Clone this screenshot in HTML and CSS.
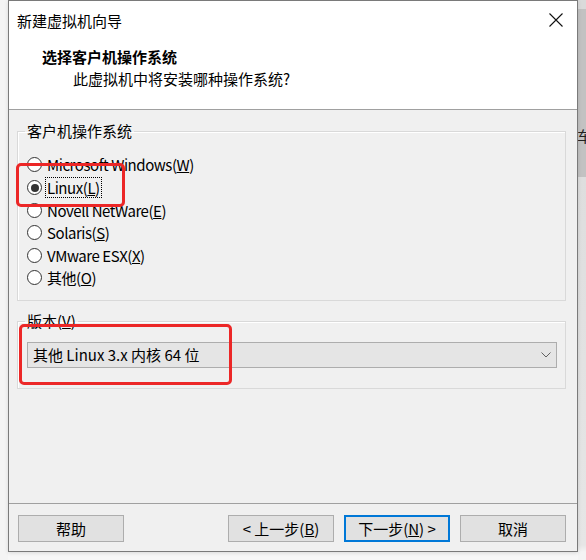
FILE: index.html
```html
<!DOCTYPE html>
<html lang="zh-CN">
<head>
<meta charset="utf-8">
<title>新建虚拟机向导</title>
<link rel="stylesheet" href="styles.css">
</head>
<body>
<div class="desktop">
  <div class="left-gap"></div>
  <div class="window">
    <div class="top">
      <div class="titlebar">
        <span class="title">新建虚拟机向导</span>
        <span class="close">
          <svg width="14" height="14" viewBox="0 0 14 14"><path d="M0.5 0.5 L13.5 13.5 M13.5 0.5 L0.5 13.5" stroke="#111" stroke-width="1.1" fill="none"/></svg>
        </span>
      </div>
      <div class="header">
        <div class="heading">选择客户机操作系统</div>
        <div class="subheading">此虚拟机中将安装哪种操作系统?</div>
      </div>
    </div>
    <div class="content">
      <fieldset class="group os-group">
        <legend>客户机操作系统</legend>
        <div class="radio"><span class="circle"></span><span class="lbl">Microsoft Windows(<u>W</u>)</span></div>
        <div class="radio"><span class="circle checked"></span><span class="lbl focus">Linux(<u>L</u>)</span></div>
        <div class="radio"><span class="circle"></span><span class="lbl">Novell NetWare(<u>E</u>)</span></div>
        <div class="radio"><span class="circle"></span><span class="lbl">Solaris(<u>S</u>)</span></div>
        <div class="radio"><span class="circle"></span><span class="lbl">VMware ESX(<u>X</u>)</span></div>
        <div class="radio"><span class="circle"></span><span class="lbl">其他(<u>O</u>)</span></div>
      </fieldset>
      <fieldset class="group ver-group">
        <legend>版本(<u>V</u>)</legend>
        <div class="select">
          <span class="select-text">其他 Linux 3.x 内核 64 位</span>
          <svg class="chevron" width="10" height="6" viewBox="0 0 10 6"><path d="M0.5 0.5 L5 5 L9.5 0.5" stroke="#606060" stroke-width="1" fill="none"/></svg>
        </div>
      </fieldset>
    </div>
    <div class="footer">
      <button class="btn">帮助</button>
      <div class="nav">
        <button class="btn">&lt; 上一步(<u>B</u>)</button>
        <button class="btn primary">下一步(<u>N</u>) &gt;</button>
        <button class="btn">取消</button>
      </div>
    </div>
    <div class="mark mark-linux"></div>
    <div class="mark mark-version"></div>
  </div>
  <div class="edge"><span class="edge-char">车</span></div>
</div>
</body>
</html>
```
FILE: styles.css
```css
* { box-sizing: border-box; }

html, body {
  margin: 0;
  padding: 0;
}

body {
  width: 586px;
  height: 560px;
  overflow: hidden;
  background: #f7f7f7;
  font-family: "Noto Sans CJK SC", "Noto Sans", sans-serif;
  font-size: 15px;
  color: #000;
}

.desktop {
  display: flex;
  align-items: flex-start;
  height: 560px;
}

.left-gap {
  width: 8px;
  height: 560px;
  background: #f4f4f4;
}

.window {
  position: relative;
  width: 570px;
  height: 552px;
  border: 1px solid #7a7a7a;
  background: #f0f0f0;
  display: flex;
  flex-direction: column;
  box-shadow: 0 1px 4px rgba(0, 0, 0, 0.12);
}

.top {
  height: 109px;
  background: #ffffff;
  border-bottom: 1px solid #a0a0a0;
  display: flex;
  flex-direction: column;
}

.titlebar {
  height: 38px;
  display: flex;
  align-items: center;
  justify-content: space-between;
  padding: 0 14px 0 8px;
}

.title {
  line-height: 20px;
  font-size: 15px;
  margin-top: 2px;
}

.close {
  display: flex;
  width: 14px;
  height: 14px;
}

.header {
  padding-top: 8px;
  display: flex;
  flex-direction: column;
  gap: 2px;
}

.heading {
  padding-left: 33px;
  font-weight: 700;
  line-height: 20px;
}

.subheading {
  padding-left: 64px;
  line-height: 20px;
}

.content {
  flex: 1;
  padding: 11px 11px 0 8px;
  display: flex;
  flex-direction: column;
  gap: 10px;
}

.group {
  margin: 0;
  min-width: 0;
  border: 1px solid #d9d9d9;
  box-shadow: inset 1px 1px 0 #ffffff;
}

.group legend {
  padding: 0 2px;
  margin-left: -2px;
  line-height: 20px;
}

.os-group {
  padding: 12.7px 8px 11px 9px;
}

.radio {
  height: 22.6px;
  display: flex;
  align-items: center;
}

.circle {
  width: 15px;
  height: 15px;
  border: 1px solid #333333;
  border-radius: 50%;
  background: #ffffff;
  flex: none;
  display: flex;
  align-items: center;
  justify-content: center;
  margin-right: 5px;
}

.circle.checked::after {
  content: "";
  width: 8px;
  height: 8px;
  border-radius: 50%;
  background: #333333;
}

.lbl {
  line-height: 19px;
  border: 1px solid transparent;
  padding: 0 1px;
  margin-left: -2px;
  letter-spacing: -0.45px;
}

.lbl.focus {
  border: 1px dotted #000000;
}

.ver-group {
  padding: 11px 8px 20px 9px;
}

.select {
  height: 26px;
  border: 1px solid #adadad;
  background: #e5e5e5;
  display: flex;
  align-items: center;
  justify-content: space-between;
  padding: 0 5px 0 5px;
}

.select-text {
  line-height: 20px;
}

.footer {
  height: 48px;
  border-top: 1px solid #a0a0a0;
  padding: 11px 11px 9px 9px;
  display: flex;
  justify-content: space-between;
  align-items: flex-start;
}

.nav {
  display: flex;
  gap: 10px;
}

.btn {
  width: 106px;
  height: 27px;
  border: 1px solid #adadad;
  background: #e1e1e1;
  font-family: inherit;
  font-size: 15px;
  color: #000;
  padding: 0;
  line-height: 20px;
}

.btn.primary {
  border: 2px solid #0078d7;
}

.mark {
  position: absolute;
  border: 3px solid #ec2727;
  border-radius: 5px;
}

.mark-linux {
  left: 7px;
  top: 162px;
  width: 109px;
  height: 44px;
}

.mark-version {
  left: 10px;
  top: 323px;
  width: 213px;
  height: 61px;
}

.edge {
  width: 8px;
  height: 560px;
  overflow: hidden;
  background: linear-gradient(to bottom, #dadada 0, #dadada 9px, #c2c2c2 9px, #c2c2c2 177px, #dedede 177px, #e6e6e6 545px, #f4f4f4 552px);
  padding-top: 128px;
}

.edge-char {
  display: block;
  font-size: 15px;
  line-height: 16px;
  margin-left: -1px;
  color: #222;
}
```
